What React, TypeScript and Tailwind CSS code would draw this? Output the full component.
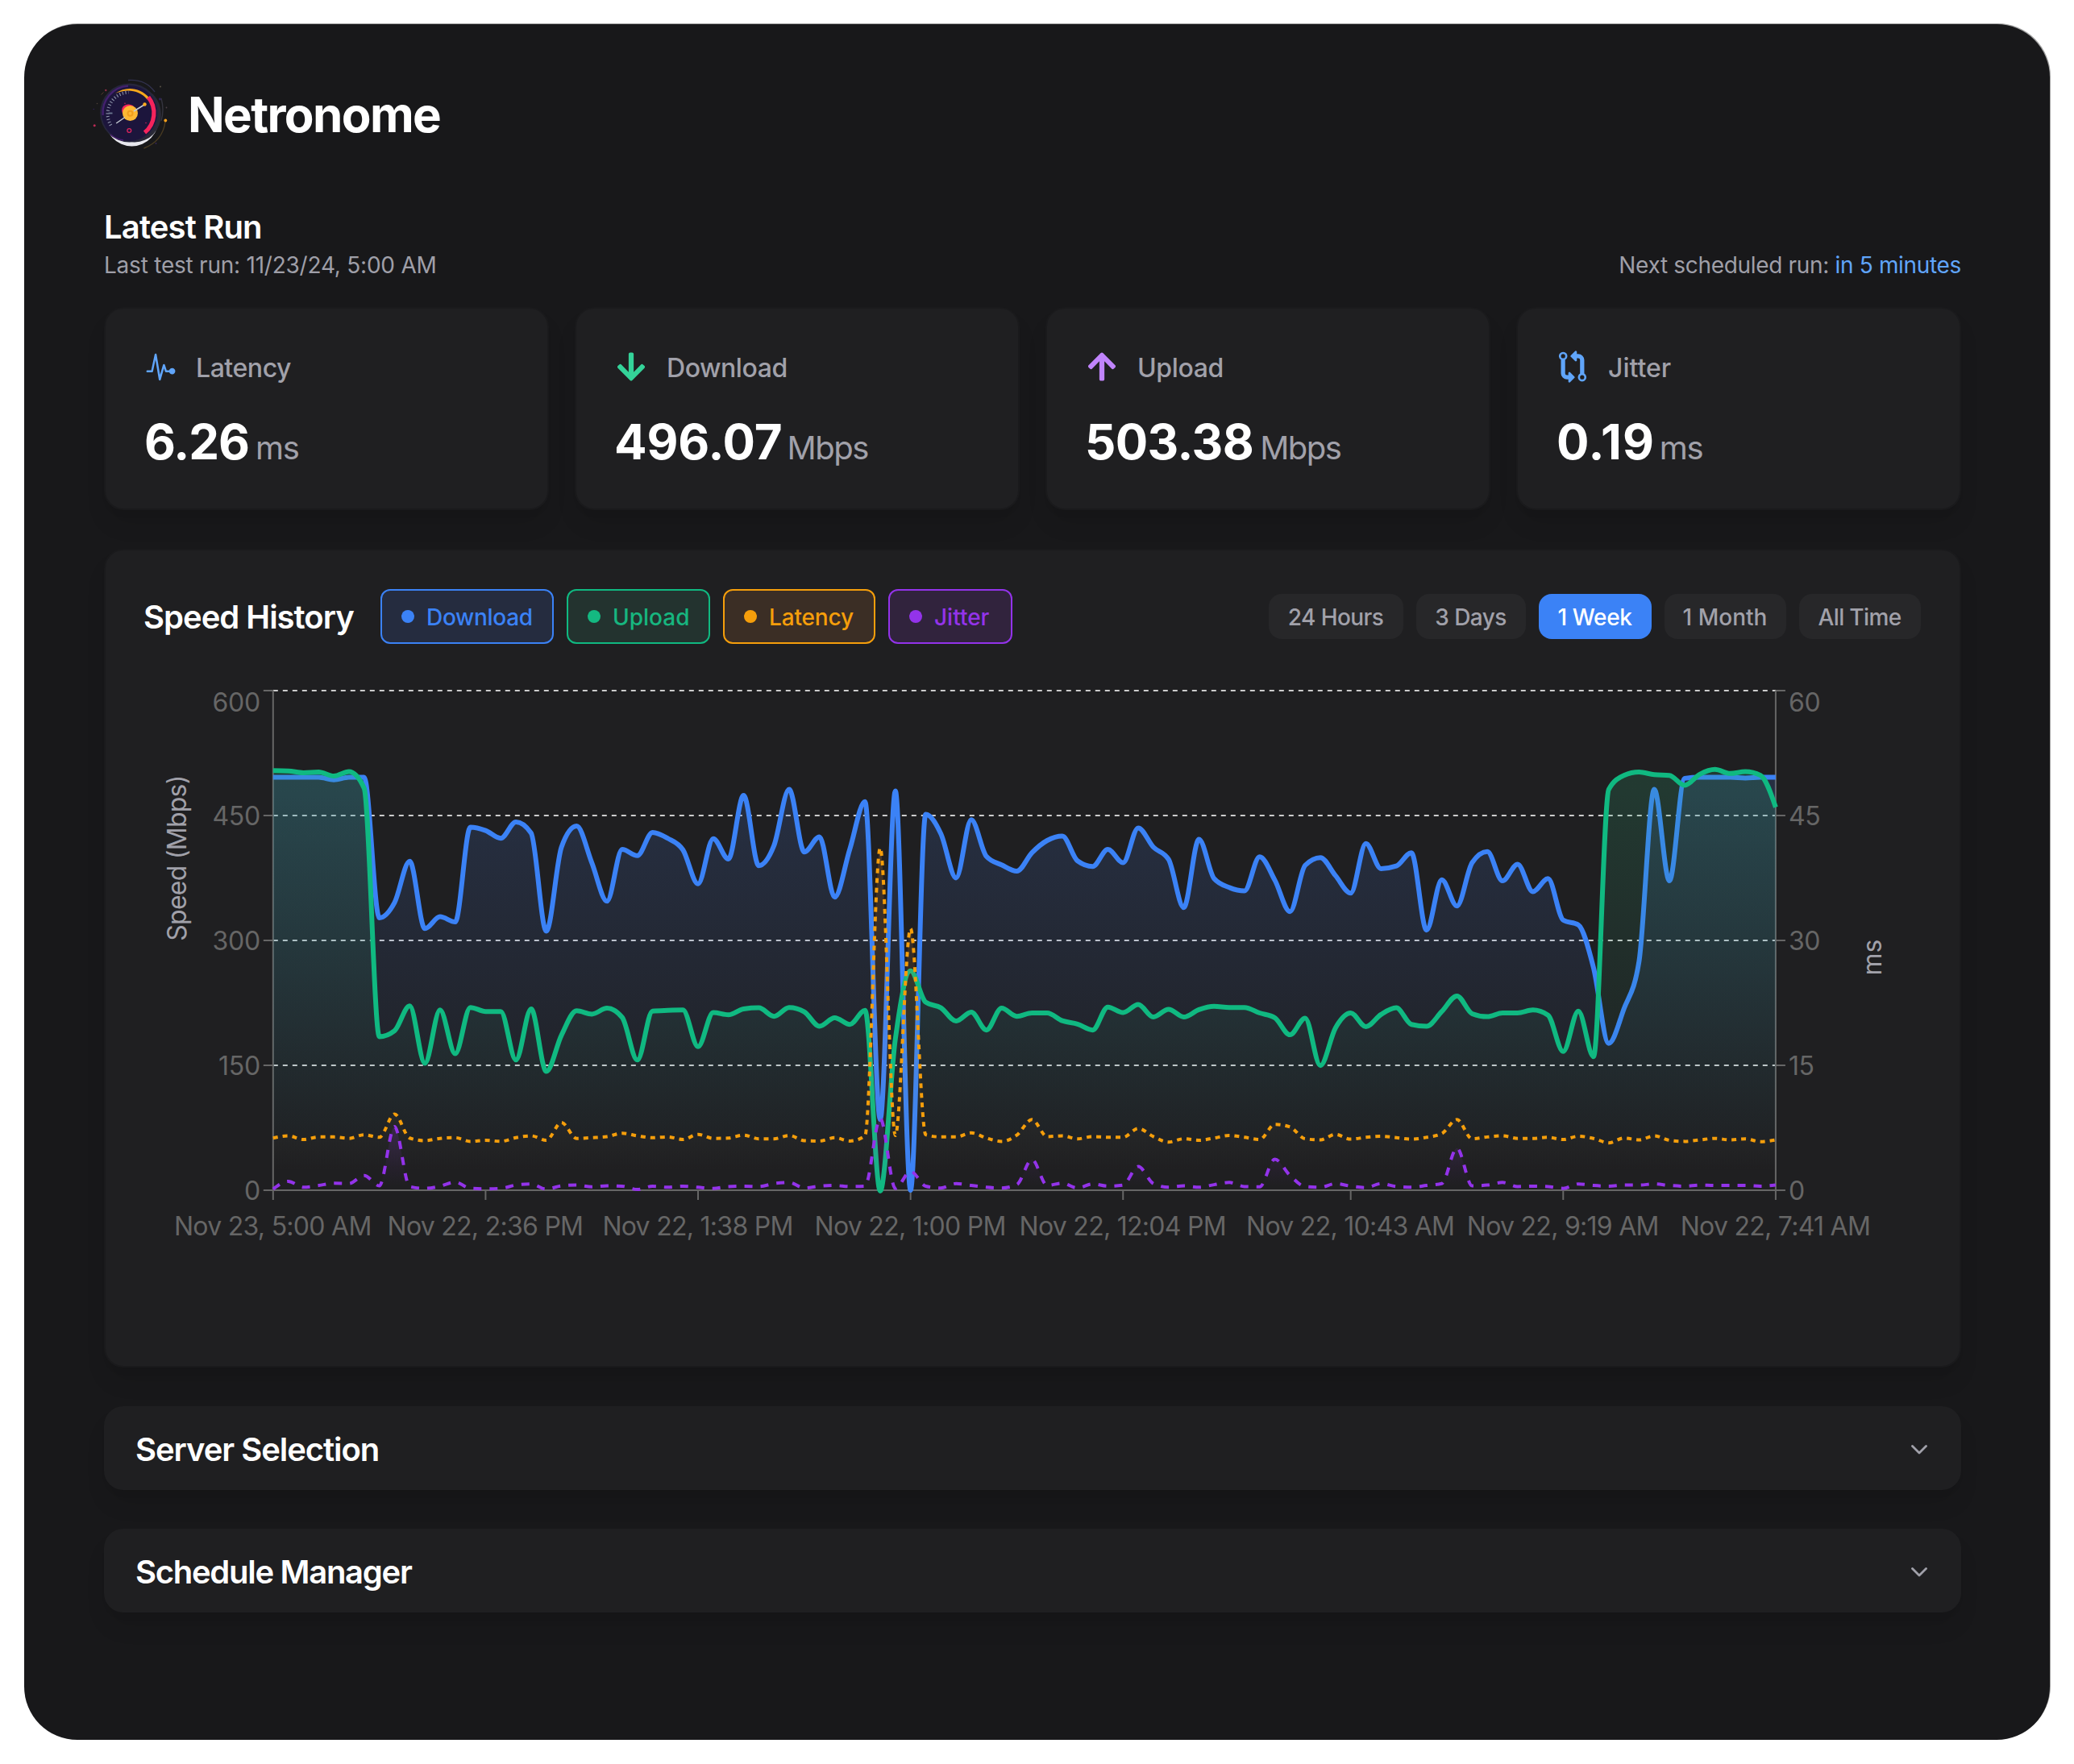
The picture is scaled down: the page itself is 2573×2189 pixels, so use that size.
import type { ReactNode } from "react";
import { FaArrowDown, FaArrowUp } from "react-icons/fa";
import { IoIosPulse } from "react-icons/io";
import { IoGitCompare } from "react-icons/io5";

/* Plot geometry inside the chart's drawing area. */
const LEFT = 159.8;
const RIGHT = 2023.9;
const TOP = 58;
const BOTTOM = 678;

/* Samples are depths on a scale where 59 is the top grid line and 1409 the zero line. */
const DEPTH_TOP = 59;
const DEPTH_ZERO = 1409;

const download = [
  293, 293, 293, 293, 300, 293, 293, 673, 632, 520, 702, 670, 684, 428, 437, 458, 414, 444, 709, 482,
  425, 524, 628, 488, 505, 442, 458, 489, 581, 459, 514, 342, 532, 478, 326, 495, 454, 617, 487, 359,
  1218, 330, 1409, 393, 446, 565, 408, 507, 530, 547, 497, 464, 452, 519, 534, 488, 524, 430, 482, 515,
  645, 461, 567, 591, 600, 508, 571, 656, 531, 510, 559, 606, 472, 540, 533, 497, 706, 570, 641, 524,
  494, 573, 528, 602, 567, 679, 692, 808, 1012, 919, 790, 326, 573, 296, 293, 293, 293, 295, 293, 293,
];

const upload = [
  275, 276, 281, 279, 290, 278, 323, 994, 978, 911, 1066, 922, 1040, 915, 926, 926, 1057, 919, 1088, 990,
  924, 933, 917, 942, 1057, 925, 923, 922, 1021, 929, 935, 919, 916, 939, 915, 927, 966, 943, 961, 923,
  1411, 1000, 816, 901, 916, 952, 928, 976, 917, 939, 930, 930, 951, 960, 976, 914, 929, 907, 941, 920,
  941, 921, 912, 915, 915, 930, 943, 989, 944, 1072, 970, 930, 967, 934, 916, 961, 966, 926, 884, 932,
  940, 930, 930, 922, 936, 1034, 925, 1048, 326, 288, 279, 286, 288, 315, 285, 272, 283, 278, 288, 374,
];

const latency = [
  1268, 1262, 1272, 1265, 1265, 1269, 1259, 1266, 1203, 1268, 1275, 1269, 1267, 1277, 1274, 1277, 1267, 1262, 1274, 1226,
  1269, 1267, 1264, 1255, 1262, 1267, 1265, 1272, 1258, 1269, 1268, 1260, 1270, 1270, 1261, 1275, 1276, 1267, 1276, 1262,
  484, 1261, 702, 1259, 1265, 1265, 1254, 1268, 1277, 1260, 1218, 1264, 1262, 1270, 1264, 1266, 1266, 1242, 1264, 1279,
  1270, 1274, 1268, 1261, 1266, 1272, 1231, 1238, 1270, 1273, 1258, 1271, 1266, 1263, 1267, 1271, 1266, 1256, 1218, 1270,
  1265, 1262, 1269, 1269, 1266, 1272, 1263, 1269, 1281, 1268, 1273, 1262, 1274, 1277, 1273, 1269, 1273, 1270, 1278, 1273,
];

const jitter = [
  1406, 1385, 1401, 1396, 1390, 1391, 1369, 1397, 1237, 1399, 1404, 1398, 1387, 1404, 1405, 1404, 1395, 1392, 1406, 1397,
  1395, 1400, 1397, 1398, 1407, 1398, 1401, 1398, 1401, 1404, 1399, 1398, 1399, 1391, 1388, 1403, 1398, 1396, 1399, 1398,
  1215, 1404, 1358, 1398, 1403, 1391, 1396, 1401, 1403, 1394, 1326, 1396, 1390, 1403, 1392, 1398, 1395, 1345, 1391, 1401,
  1397, 1401, 1394, 1388, 1399, 1400, 1325, 1369, 1399, 1401, 1391, 1398, 1402, 1391, 1399, 1401, 1396, 1391, 1295, 1397,
  1395, 1388, 1399, 1398, 1399, 1404, 1392, 1396, 1398, 1395, 1395, 1392, 1396, 1398, 1395, 1396, 1396, 1396, 1398, 1395,
];

type Point = [number, number];

const xAt = (i: number) => LEFT + ((RIGHT - LEFT) * i) / 99;

const toPoints = (values: number[]): Point[] =>
  values.map((v, i) => [xAt(i), TOP + ((v - DEPTH_TOP) * (BOTTOM - TOP)) / (DEPTH_ZERO - DEPTH_TOP)]);

/* Monotone cubic interpolation, so the curve never overshoots a sample. */
function monotonePath(pts: Point[]): string {
  const n = pts.length;
  const slopes = pts.slice(1).map((p, i) => (p[1] - pts[i][1]) / (p[0] - pts[i][0]));
  const tangents = pts.map((_, i) => {
    if (i === 0 || i === n - 1) return 0;
    const a = slopes[i - 1];
    const b = slopes[i];
    if (a * b <= 0) return 0;
    return Math.sign(a) * Math.min(Math.abs(a), Math.abs(b), 0.25 * Math.abs(a + b)) * 2;
  });
  tangents[0] = (3 * slopes[0] - tangents[1]) / 2;
  tangents[n - 1] = (3 * slopes[n - 2] - tangents[n - 2]) / 2;
  let d = `M${pts[0][0]},${pts[0][1]}`;
  for (let i = 1; i < n; i++) {
    const [x0, y0] = pts[i - 1];
    const [x1, y1] = pts[i];
    const h = (x1 - x0) / 3;
    d += `C${x0 + h},${y0 + h * tangents[i - 1]} ${x1 - h},${y1 - h * tangents[i]} ${x1},${y1}`;
  }
  return d;
}

const series = [
  { id: "download", values: download, color: "#3b82f6", fill: "#4778d8", opacity: 0.18, width: 6, dash: undefined },
  { id: "upload", values: upload, color: "#10b981", fill: "#30b07a", opacity: 0.18, width: 6, dash: undefined },
  { id: "latency", values: latency, color: "#f59e0b", fill: "#e0904a", opacity: 0.18, width: 4, dash: "6 6" },
  { id: "jitter", values: jitter, color: "#9333ea", fill: "#9333ea", opacity: 0.18, width: 4, dash: "10 10" },
];

const yTicks = [
  { left: "600", right: "60", y: 58, baseline: 84 },
  { left: "450", right: "45", y: 213, baseline: 225 },
  { left: "300", right: "30", y: 368, baseline: 380 },
  { left: "150", right: "15", y: 523, baseline: 535 },
  { left: "0", right: "0", y: 678, baseline: 690 },
];

const xTicks = [
  { index: 0, label: "Nov 23, 5:00 AM" },
  { index: 14, label: "Nov 22, 2:36 PM" },
  { index: 28, label: "Nov 22, 1:38 PM" },
  { index: 42, label: "Nov 22, 1:00 PM" },
  { index: 56, label: "Nov 22, 12:04 PM" },
  { index: 71, label: "Nov 22, 10:43 AM" },
  { index: 85, label: "Nov 22, 9:19 AM" },
  { index: 99, label: "Nov 22, 7:41 AM" },
];

function SpeedChart() {
  return (
    <svg width="2204" height="848" viewBox="0 0 2204 848" className="block text-[32px]">
      <defs>
        {series.map((s) => (
          <linearGradient key={s.id} id={`fill-${s.id}`} x1="0" y1="0" x2="0" y2="1">
            <stop offset="5%" stopColor={s.fill} stopOpacity={s.opacity} />
            <stop offset="95%" stopColor={s.fill} stopOpacity="0" />
          </linearGradient>
        ))}
      </defs>

      {yTicks.map((t) => (
        <line
          key={t.y}
          x1={LEFT}
          x2={RIGHT}
          y1={t.y}
          y2={t.y}
          stroke="#cccccc"
          strokeWidth="2"
          strokeDasharray="6 6"
        />
      ))}

      <g stroke="#666666" strokeWidth="2">
        <line x1={LEFT} x2={RIGHT} y1={BOTTOM} y2={BOTTOM} />
        <line x1={LEFT} x2={LEFT} y1={TOP} y2={BOTTOM} />
        <line x1={RIGHT} x2={RIGHT} y1={TOP} y2={BOTTOM} />
        {yTicks.map((t) => (
          <path key={t.y} d={`M${LEFT - 12},${t.y}H${LEFT}M${RIGHT},${t.y}H${RIGHT + 12}`} />
        ))}
        {xTicks.map((t) => (
          <line key={t.index} x1={xAt(t.index)} x2={xAt(t.index)} y1={BOTTOM} y2={BOTTOM + 12} />
        ))}
      </g>

      <g fill="#666666">
        {yTicks.map((t) => (
          <g key={t.y}>
            <text x={LEFT - 16} y={t.baseline} textAnchor="end" className="tracking-[-0.3px]">
              {t.left}
            </text>
            <text x={RIGHT + 16} y={t.baseline} className="tracking-[-0.3px]">
              {t.right}
            </text>
          </g>
        ))}
        {xTicks.map((t) => (
          <text key={t.index} x={xAt(t.index) - 0.5} y={734} textAnchor="middle" className="tracking-[-0.72px]">
            {t.label}
          </text>
        ))}
      </g>

      <text transform="translate(52 266) rotate(-90)" textAnchor="middle" fill="#a1a1aa" className="tracking-[-0.75px]">
        Speed (Mbps)
      </text>
      <text transform="translate(2155 389) rotate(-90)" textAnchor="middle" fill="#a1a1aa">
        ms
      </text>

      {series.map((s) => {
        const line = monotonePath(toPoints(s.values));
        return (
          <g key={s.id}>
            <path d={`${line}L${RIGHT},${BOTTOM}L${LEFT},${BOTTOM}Z`} fill={`url(#fill-${s.id})`} />
            <path d={line} fill="none" stroke={s.color} strokeWidth={s.width} strokeDasharray={s.dash} />
          </g>
        );
      })}
    </svg>
  );
}

function Logo() {
  return (
    <svg width="96" height="96" viewBox="0 0 96 96" className="shrink-0" fill="none">
      <ellipse cx="50.5" cy="53.5" rx="34" ry="36" fill="#e8e8ee" />
      <ellipse cx="54" cy="50" rx="33" ry="34.5" fill="#2a2a36" />
      <circle cx="47.6" cy="48" r="36.5" fill="#26263c" />
      <circle cx="47.6" cy="48.4" r="34.5" fill="#1c153c" />
      <path d="M14.6 51A33.5 33.5 0 0 1 46 14.6" stroke="#43206e" strokeWidth="2.4" />
      <path d="M24 75A34 34 0 0 0 40 82" stroke="#4b1d74" strokeWidth="1.4" />
      <path d="M30 24C42 15 60 15.500 72 29L69.500 31.500C60 19.500 44 18 30 24Z" fill="#f6a81c" />
      <path d="M71 28.500A31.500 31.500 0 0 1 66.500 72.500" stroke="#f5245c" strokeWidth="5.2" />
      <path d="M24.500 63.500A27 27 0 0 1 46.500 22.500" stroke="#8d93a8" strokeWidth="4" strokeDasharray="1.1 2.6" />
      <path d="M21.500 48.500h5" stroke="#6d7a92" strokeWidth="1.800" />
      <path d="M40 50.500C35 42 41 37 47 37.500C50 37.800 53 39 54 42Z" fill="#f5245c" />
      <circle cx="48.500" cy="48.500" r="9.500" fill="#fdb834" />
      <circle cx="48.500" cy="48.800" r="4" fill="#f09d1d" />
      <circle cx="48.500" cy="48.800" r="2" fill="#fdb834" />
      <path d="M31.200 61L42 53.500M53 46L66 38" stroke="#c5cbd3" strokeWidth="1.500" />
      <circle cx="66.500" cy="37.500" r="2.200" fill="#fdab1f" />
      <circle cx="47.300" cy="70" r="2.400" stroke="#e0245e" strokeWidth="1.300" />
      <circle cx="42" cy="36.300" r="0.800" fill="#c3225c" />
      <circle cx="68" cy="60.500" r="0.800" fill="#c3225c" />
      <path d="M46 7.500C59 6.500 71 11 79 22" stroke="#32324f" strokeWidth="1.400" />
      <path d="M87 30C89.500 39 90 48 87 58" stroke="#34343e" strokeWidth="1.400" />
      <path d="M92 59C90 74 81 86 65.500 92" stroke="#4a3c22" strokeWidth="1.400" />
      <circle cx="92.300" cy="57.500" r="1.900" fill="#f7a01b" />
      <circle cx="4.200" cy="63.700" r="1.500" fill="#b92a54" />
      <circle cx="18.300" cy="20" r="1.200" fill="#8f2f48" />
      <path d="M12.500 25.500l3-3" stroke="#5a4330" strokeWidth="0.900" />
      <circle cx="85.500" cy="31" r="1.400" fill="#30245a" />
      <circle cx="86" cy="15.500" r="0.900" fill="#5d564a" />
      <circle cx="93.500" cy="41.500" r="0.900" fill="#4e4048" />
      <circle cx="3.300" cy="43.500" r="0.800" fill="#30245a" />
      <circle cx="7.500" cy="36.500" r="0.800" fill="#4e4038" />
      <circle cx="80.500" cy="86" r="0.900" fill="#37265a" />
    </svg>
  );
}

function StatCard({
  icon,
  label,
  labelClass,
  value,
  valueClass,
  unit,
  unitClass,
}: {
  icon: ReactNode;
  label: string;
  labelClass: string;
  value: string;
  valueClass: string;
  unit: string;
  unitClass: string;
}) {
  return (
    <div className="h-[252px] rounded-[24px] border-2 border-[#1a1a1c] bg-[#1f1f21] p-12 shadow-[0_20px_30px_-6px_rgba(0,0,0,0.1),0_8px_12px_-8px_rgba(0,0,0,0.1)]">
      <div className="mb-[33px] flex h-12 items-center gap-6">
        <span className="flex size-10 items-center justify-center">{icon}</span>
        <span className={`pt-[3px] text-[32px] leading-[48px] font-medium text-[#a1a1aa] ${labelClass}`}>{label}</span>
      </div>
      <div className="flex h-[72px] items-baseline whitespace-nowrap">
        <span className={`text-[60px] leading-[72px] font-bold text-white ${valueClass}`}>{value}</span>
        <span className={`text-[40px] text-[#a1a1aa] ${unitClass}`}>{unit}</span>
      </div>
    </div>
  );
}

const toggles = [
  {
    label: "Download",
    box: "w-[215px] border-[#3b82f6] bg-[#252c3f] text-[#3b82f6] tracking-[-0.3px]",
    dot: "bg-[#3b82f6]",
  },
  {
    label: "Upload",
    box: "w-[178px] border-[#10b981] bg-[#23332f] text-[#17b67f] tracking-normal",
    dot: "bg-[#14b981]",
  },
  {
    label: "Latency",
    box: "w-[189px] border-[#f59e0b] bg-[#3b2e25] text-[#f59e0b] tracking-[-0.15px]",
    dot: "bg-[#f59e0b]",
  },
  {
    label: "Jitter",
    box: "w-[154px] border-[#9333ea] bg-[#31233d] text-[#9333ea] tracking-normal",
    dot: "bg-[#9333ea]",
  },
];

const ranges = [
  { label: "24 Hours", size: "w-[167px] tracking-[-0.6px]", active: false },
  { label: "3 Days", size: "w-[136px] tracking-[-0.6px]", active: false },
  { label: "1 Week", size: "w-[140px] tracking-[-0.35px]", active: true },
  { label: "1 Month", size: "w-[151px] tracking-normal", active: false },
  { label: "All Time", size: "w-[151px] tracking-[-0.65px]", active: false },
];

function CollapsedSection({ title, titleClass }: { title: string; titleClass: string }) {
  return (
    <button className="mt-12 flex h-[104px] w-full items-center justify-between rounded-[24px] bg-[#1f1f21] pr-[42px] pl-[39px] shadow-[0_20px_30px_-6px_rgba(0,0,0,0.1),0_8px_12px_-8px_rgba(0,0,0,0.1)]">
      <span className={`pt-[3px] text-[40px] leading-[56px] font-semibold text-white ${titleClass}`}>{title}</span>
      <svg width="20" height="12" viewBox="0 0 20 12" fill="none" className="mt-1">
        <path
          d="M1.500 1.500L10 10L18.500 1.500"
          stroke="#a1a1aa"
          strokeWidth="2.800"
          strokeLinecap="round"
          strokeLinejoin="round"
        />
      </svg>
    </button>
  );
}

export default function App() {
  return (
    <div className="h-[2189px] w-[2573px] bg-white p-[30px] font-[Inter,'Liberation_Sans',sans-serif]">
      <main className="h-[2129px] w-[2513px] rounded-[66px] bg-[#18181a] pt-[62px] pl-[99px] shadow-[1px_-1px_0_rgba(24,24,26,0.4)]">
        <div className="w-[2304px]">
          <header className="-ml-4 flex h-24 items-center">
            <Logo />
            <h1 className="mt-1 ml-6 text-[60px] leading-[72px] font-bold tracking-[-1.640px] text-white">Netronome</h1>
          </header>

          <section className="mt-[69px] flex items-end justify-between text-[28px] leading-10 text-[#9f9fa8]">
            <div>
              <h2 className="mb-[3px] pt-px text-[40px] leading-[48px] font-semibold tracking-[-0.850px] text-white">Latest Run</h2>
              <p className="tracking-[-0.230px]">Last test run: 11/23/24, 5:00 AM</p>
            </div>
            <p className="tracking-[-0.330px]">
              Next scheduled run: <span className="text-[#60a5fa]">in 5 minutes</span>
            </p>
          </section>

          <section className="mt-8 grid grid-cols-4 gap-8">
            <StatCard
              icon={<IoIosPulse size={41} className="shrink-0 text-[#60a5fa]" />}
              label="Latency"
              labelClass="tracking-[-0.450px]"
              value="6.26"
              valueClass="tracking-[-1px]"
              unit="ms"
              unitClass="ml-2 tracking-[-1.200px]"
            />
            <StatCard
              icon={<FaArrowDown size={40} className="shrink-0 text-[#34d399]" />}
              label="Download"
              labelClass="tracking-[-0.450px]"
              value="496.07"
              valueClass="-ml-px tracking-[-0.100px]"
              unit="Mbps"
              unitClass="ml-1.5 tracking-[-1.500px]"
            />
            <StatCard
              icon={<FaArrowUp size={40} className="shrink-0 text-[#c084fc]" />}
              label="Upload"
              labelClass="tracking-[-0.350px]"
              value="503.38"
              valueClass="-ml-px tracking-[-0.600px]"
              unit="Mbps"
              unitClass="ml-2 tracking-[-1.500px]"
            />
            <StatCard
              icon={<IoGitCompare size={42} className="shrink-0 text-[#60a5fa]" />}
              label="Jitter"
              labelClass="tracking-normal"
              value="0.19"
              valueClass="tracking-[0.900px]"
              unit="ms"
              unitClass="ml-1.5 tracking-[-1.200px]"
            />
          </section>

          <section className="mt-12 h-[1016px] rounded-[24px] border-2 border-[#1a1a1c] bg-[#1f1f21] p-12 shadow-[0_20px_30px_-6px_rgba(0,0,0,0.1),0_8px_12px_-8px_rgba(0,0,0,0.1)]">
            <div className="flex h-[68px] items-center justify-between">
              <div className="flex items-center gap-4">
                <h2 className="-ml-px w-[278px] pt-0.5 text-[40px] leading-[48px] font-semibold tracking-[-1px] whitespace-nowrap text-white">
                  Speed History
                </h2>
                {toggles.map((t) => (
                  <button
                    key={t.label}
                    className={`flex h-[68px] items-center gap-[15px] rounded-[12px] border-2 pl-6 text-[28px] leading-10 font-medium ${t.box}`}
                  >
                    <span className={`size-4 rounded-full ${t.dot}`} />
                    <span className="pt-0.5">{t.label}</span>
                  </button>
                ))}
              </div>
              <div className="flex items-center gap-4">
                {ranges.map((r) => (
                  <button
                    key={r.label}
                    className={`flex h-14 items-center justify-center rounded-[16px] pt-0.5 pr-px text-[28px] leading-10 font-medium ${
                      r.active ? "bg-[#3b82f6] text-white" : "bg-[#272729] text-[#a1a1aa]"
                    } ${r.size}`}
                  >
                    {r.label}
                  </button>
                ))}
              </div>
            </div>
            <SpeedChart />
          </section>

          <CollapsedSection title="Server Selection" titleClass="tracking-[-1.050px]" />
          <CollapsedSection title="Schedule Manager" titleClass="tracking-[-1.280px]" />
        </div>
      </main>
    </div>
  );
}
